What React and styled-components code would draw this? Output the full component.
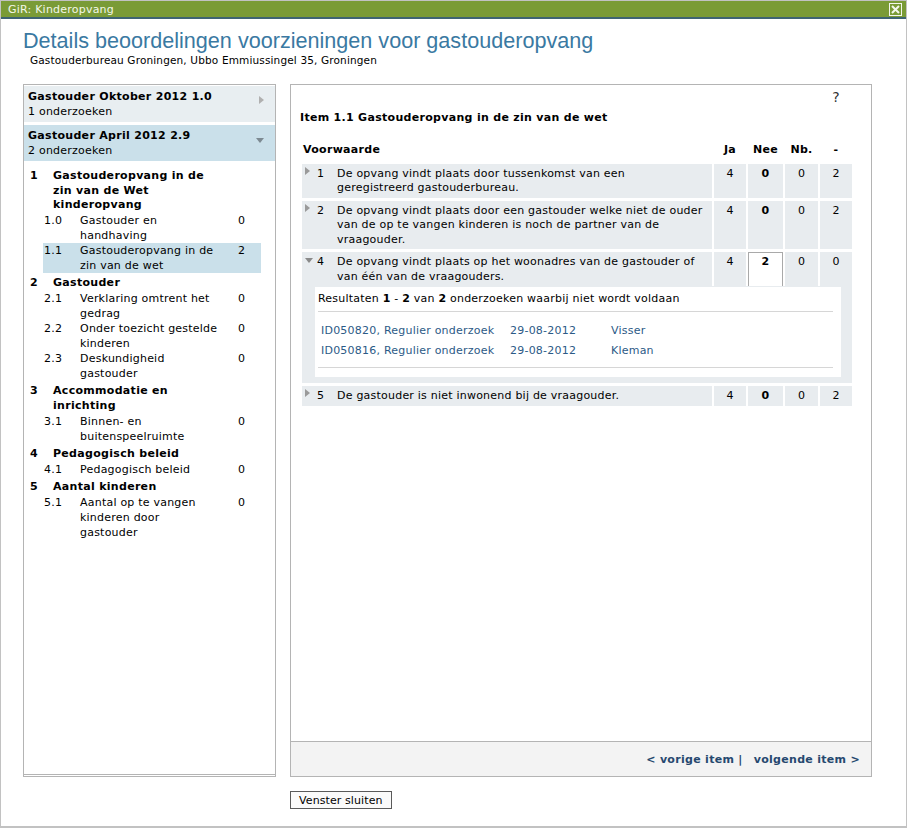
import styled, { createGlobalStyle } from "styled-components";

const GlobalStyle = createGlobalStyle`
  html, body {
    margin: 0;
    padding: 0;
    background: #ffffff;
  }
  body {
    font-family: "DejaVu Sans", Verdana, sans-serif;
    font-size: 11px;
    letter-spacing: 0.22px;
    color: #000;
  }
`;

const Window = styled.div`
  box-sizing: border-box;
  width: 907px;
  height: 828px;
  border: 1px solid #c2c2c2;
  border-bottom-width: 2px;
  background: #fff;
`;

const TitleBar = styled.div`
  display: flex;
  align-items: center;
  justify-content: space-between;
  height: 16px;
  padding: 0 4px 0 7px;
  background: #7a9b36;
  border-bottom: 2px solid #3e6472;
  color: #f3f7e8;
  font-size: 11px;
`;

const CloseBox = styled.div`
  display: flex;
  align-items: center;
  justify-content: center;
  width: 11px;
  height: 11px;
  border: 1px solid #f4f7ec;
`;

const Content = styled.div`
  padding: 0 22px;
`;

const Heading = styled.h1`
  margin: 9px 0 0;
  font-family: "Liberation Sans", Arial, sans-serif;
  font-size: 21.6px;
  font-weight: normal;
  letter-spacing: 0;
  line-height: 26px;
  color: #3a79a2;
`;

const SubHeading = styled.div`
  padding-left: 7px;
  line-height: 13px;
  font-size: 10.5px;
  letter-spacing: 0.15px;
`;

const Layout = styled.div`
  display: grid;
  grid-template-columns: 253px 582px;
  column-gap: 14px;
  row-gap: 14px;
  margin-top: 17px;
`;

const LeftPanel = styled.div`
  box-sizing: border-box;
  height: 693px;
  border: 1px solid #b4b4b4;
  border-bottom: 3px double #b4b4b4;
  padding-top: 1px;
`;

const Group = styled.div`
  position: relative;
  padding: 3px 4px;
  margin-bottom: 3px;
  background: ${(p) => (p.$active ? "#cae0ea" : "#e8eef1")};
  line-height: 15px;
`;

const GroupTitle = styled.div`
  font-weight: bold;
  letter-spacing: 0.3px;
`;

const GroupArrow = styled.span`
  position: absolute;
  right: 11px;
  top: 7px;
`;

const Tree = styled.div`
  padding: 5px 0 0 6px;
  line-height: 15px;
`;

const Section = styled.div`
  display: grid;
  grid-template-columns: 23px 1fr;
  margin-top: ${(p) => (p.$first ? "0" : "3.5px")};
  font-weight: bold;
  letter-spacing: 0.3px;
  line-height: 14.6px;
  white-space: pre;
`;

const Item = styled.div`
  display: grid;
  grid-template-columns: 36px 158px 1fr;
  width: 217px;
  margin-left: 13px;
  padding: 0 0 0 1px;
  background: ${(p) => (p.$selected ? "#cae0ea" : "transparent")};
  white-space: pre;
`;

const RightPanel = styled.div`
  box-sizing: border-box;
  height: 693px;
  display: flex;
  flex-direction: column;
  border: 1px solid #b4b4b4;
`;

const RightBody = styled.div`
  flex: 1;
  padding: 4px 9px 0 9px;
`;

const Help = styled.div`
  text-align: right;
  padding-right: 22px;
  font-size: 14px;
  line-height: 16px;
  color: #333;
`;

const ItemTitle = styled.div`
  margin-top: 6px;
  font-weight: bold;
  letter-spacing: 0.3px;
  line-height: 14px;
`;

const Table = styled.div`
  display: flex;
  flex-direction: column;
  gap: 3px;
  width: 550px;
  margin: 18px 0 0 2px;
`;

const Row = styled.div`
  display: grid;
  grid-template-columns: 410px 32px 35px 33px 32px;
  column-gap: 2px;
  line-height: 14.5px;
`;

const HeadCell = styled.div`
  padding: 0 1px 3px;
  font-weight: bold;
  letter-spacing: 0.3px;
  text-align: ${(p) => (p.$left ? "left" : "center")};
`;

const Cell = styled.div`
  box-sizing: border-box;
  padding: 3px 4px 2px;
  background: ${(p) => (p.$open ? "#fff" : "#e8ecef")};
  border: ${(p) => (p.$open ? "1px solid #a9a9a9" : "none")};
  border-bottom: none;
  text-align: center;
  font-weight: ${(p) => (p.$bold ? "bold" : "normal")};
  ${(p) => p.$open && "padding-top: 2px;"}
`;

const TextCell = styled.div`
  display: grid;
  grid-template-columns: 12px 20px 1fr;
  padding: 3px 4px 2px 3px;
  background: #e8ecef;
  white-space: pre;
`;

const Arrow = styled.span`
  line-height: 10px;
`;

const Expanded = styled.div`
  display: flex;
  flex-direction: column;
`;

const Detail = styled.div`
  padding: 1px 11px 6px 13px;
  background: #e8ecef;
`;

const ResultBox = styled.div`
  padding: 5px 8px 9px 3px;
  background: #fff;
`;

const ResultHead = styled.div`
  line-height: 14px;
  padding-bottom: 5px;
  border-bottom: 1px solid #d6d6d6;
`;

const ResultList = styled.div`
  padding: 9px 0 6px 3px;
  border-bottom: 1px solid #d6d6d6;
`;

const ResultRow = styled.div`
  display: grid;
  grid-template-columns: 189px 101px 1fr;
  line-height: 20px;
  color: #2c5a86;
`;

const Footer = styled.div`
  height: 34px;
  display: flex;
  align-items: center;
  justify-content: flex-end;
  gap: 11px;
  padding-right: 11px;
  background: #f3f3f3;
  border-top: 1px solid #b4b4b4;
  font-weight: bold;
  letter-spacing: 0.3px;
  color: #26486f;
`;

const NavLink = styled.span`
  cursor: pointer;
`;

const Button = styled.button`
  grid-column: 2;
  justify-self: start;
  height: 18px;
  padding: 0 8px;
  border: 1px solid #5a5a5a;
  background: #fafafa;
  font-family: "DejaVu Sans", Verdana, sans-serif;
  font-size: 11px;
  letter-spacing: 0.1px;
  color: #000;
`;

const RightTri = ({ color = "#9a9a9a" }) => (
  <svg width="5" height="8" viewBox="0 0 5 8">
    <path d="M0 0 L5 4 L0 8 Z" fill={color} />
  </svg>
);

const DownTri = ({ color = "#8a8a8a" }) => (
  <svg width="8" height="5" viewBox="0 0 8 5">
    <path d="M0 0 L8 0 L4 5 Z" fill={color} />
  </svg>
);

const tree = [
  {
    no: "1",
    title: "Gastouderopvang in de\nzin van de Wet\nkinderopvang",
    items: [
      { no: "1.0", text: "Gastouder en\nhandhaving", n: 0 },
      { no: "1.1", text: "Gastouderopvang in de\nzin van de wet", n: 2, sel: true },
    ],
  },
  {
    no: "2",
    title: "Gastouder",
    items: [
      { no: "2.1", text: "Verklaring omtrent het\ngedrag", n: 0 },
      { no: "2.2", text: "Onder toezicht gestelde\nkinderen", n: 0 },
      { no: "2.3", text: "Deskundigheid\ngastouder", n: 0 },
    ],
  },
  {
    no: "3",
    title: "Accommodatie en\ninrichting",
    items: [{ no: "3.1", text: "Binnen- en\nbuitenspeelruimte", n: 0 }],
  },
  {
    no: "4",
    title: "Pedagogisch beleid",
    items: [{ no: "4.1", text: "Pedagogisch beleid", n: 0 }],
  },
  {
    no: "5",
    title: "Aantal kinderen",
    items: [{ no: "5.1", text: "Aantal op te vangen\nkinderen door\ngastouder", n: 0 }],
  },
];

const rows = [
  { no: "1", text: "De opvang vindt plaats door tussenkomst van een\ngeregistreerd gastouderbureau.", v: [4, 0, 0, 2] },
  {
    no: "2",
    text: "De opvang vindt plaats door een gastouder welke niet de ouder\nvan de op te vangen kinderen is noch de partner van de\nvraagouder.",
    v: [4, 0, 0, 2],
  },
  { no: "4", text: "De opvang vindt plaats op het woonadres van de gastouder of\nvan één van de vraagouders.", v: [4, 2, 0, 0], open: true },
  { no: "5", text: "De gastouder is niet inwonend bij de vraagouder.", v: [4, 0, 0, 2] },
];

const results = [
  { id: "ID050820, Regulier onderzoek", date: "29-08-2012", name: "Visser" },
  { id: "ID050816, Regulier onderzoek", date: "29-08-2012", name: "Kleman" },
];

function ConditionRow({ row }) {
  return (
    <Row>
      <TextCell>
        <Arrow>{row.open ? <DownTri /> : <RightTri />}</Arrow>
        <span>{row.no}</span>
        <span>{row.text}</span>
      </TextCell>
      <Cell>{row.v[0]}</Cell>
      <Cell $bold $open={row.open}>{row.v[1]}</Cell>
      <Cell>{row.v[2]}</Cell>
      <Cell>{row.v[3]}</Cell>
    </Row>
  );
}

export default function App() {
  return (
    <Window>
      <GlobalStyle />
      <TitleBar>
        <span>GiR: Kinderopvang</span>
        <CloseBox>
          <svg width="9" height="9" viewBox="0 0 9 9">
            <path d="M1 1 L8 8 M8 1 L1 8" stroke="#f4f7ec" strokeWidth="2" />
          </svg>
        </CloseBox>
      </TitleBar>
      <Content>
        <Heading>Details beoordelingen voorzieningen voor gastouderopvang</Heading>
        <SubHeading>Gastouderbureau Groningen, Ubbo Emmiussingel 35, Groningen</SubHeading>
        <Layout>
          <LeftPanel>
            <Group>
              <GroupTitle>Gastouder Oktober 2012 1.0</GroupTitle>
              <div>1 onderzoeken</div>
              <GroupArrow>
                <RightTri color="#b0b0b0" />
              </GroupArrow>
            </Group>
            <Group $active>
              <GroupTitle>Gastouder April 2012 2.9</GroupTitle>
              <div>2 onderzoeken</div>
              <GroupArrow>
                <DownTri color="#7d8a92" />
              </GroupArrow>
            </Group>
            <Tree>
              {tree.map((s, i) => (
                <div key={s.no}>
                  <Section $first={i === 0}>
                    <span>{s.no}</span>
                    <span>{s.title}</span>
                  </Section>
                  {s.items.map((it) => (
                    <Item key={it.no} $selected={it.sel}>
                      <span>{it.no}</span>
                      <span>{it.text}</span>
                      <span>{it.n}</span>
                    </Item>
                  ))}
                </div>
              ))}
            </Tree>
          </LeftPanel>
          <RightPanel>
            <RightBody>
              <Help>?</Help>
              <ItemTitle>Item 1.1 Gastouderopvang in de zin van de wet</ItemTitle>
              <Table>
                <Row>
                  <HeadCell $left>Voorwaarde</HeadCell>
                  <HeadCell>Ja</HeadCell>
                  <HeadCell>Nee</HeadCell>
                  <HeadCell>Nb.</HeadCell>
                  <HeadCell>-</HeadCell>
                </Row>
                {rows.map((r) =>
                  r.open ? (
                    <Expanded key={r.no}>
                      <ConditionRow row={r} />
                      <Detail>
                        <ResultBox>
                          <ResultHead>
                            Resultaten <b>1</b> - <b>2</b> van <b>2</b> onderzoeken waarbij niet wordt voldaan
                          </ResultHead>
                          <ResultList>
                            {results.map((res) => (
                              <ResultRow key={res.id}>
                                <span>{res.id}</span>
                                <span>{res.date}</span>
                                <span>{res.name}</span>
                              </ResultRow>
                            ))}
                          </ResultList>
                        </ResultBox>
                      </Detail>
                    </Expanded>
                  ) : (
                    <ConditionRow key={r.no} row={r} />
                  )
                )}
              </Table>
            </RightBody>
            <Footer>
              <NavLink>&lt; vorige item |</NavLink>
              <NavLink>volgende item &gt;</NavLink>
            </Footer>
          </RightPanel>
          <Button>Venster sluiten</Button>
        </Layout>
      </Content>
    </Window>
  );
}
